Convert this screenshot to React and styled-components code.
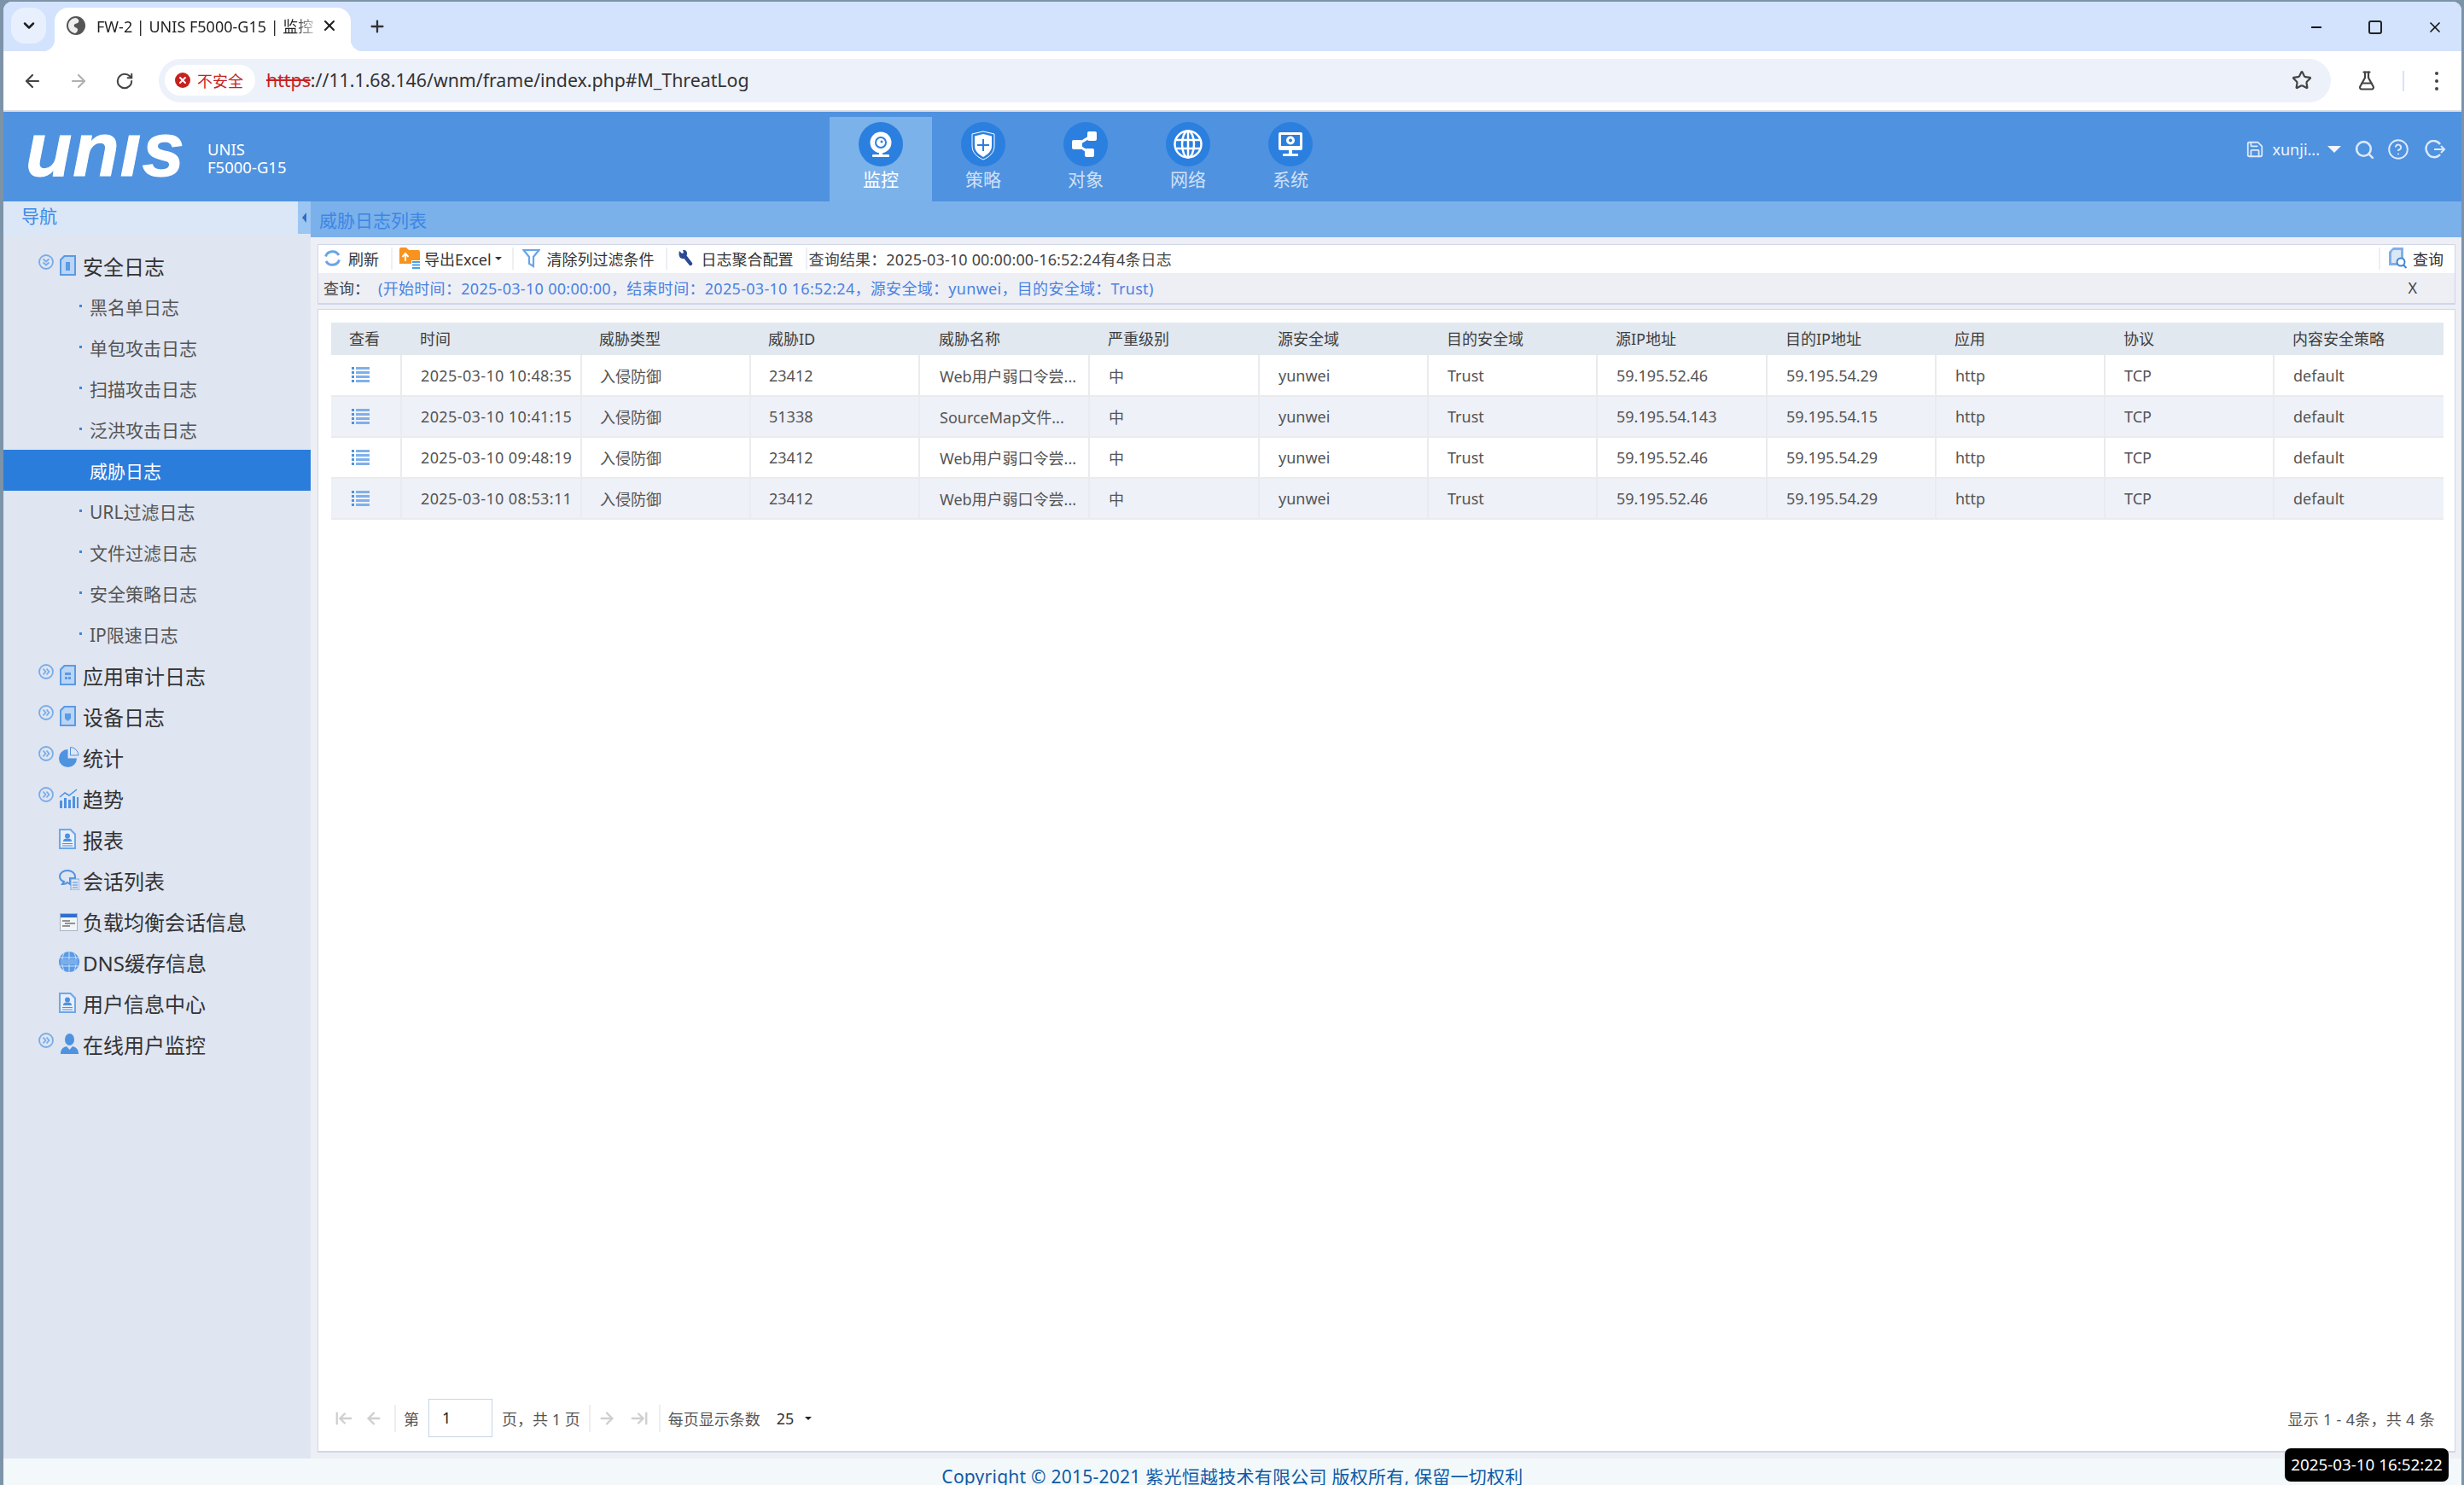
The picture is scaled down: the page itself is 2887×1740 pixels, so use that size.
import React from 'react';
import styled, { createGlobalStyle } from 'styled-components';
import {
  ArrowLeft,
  ArrowRight,
  ArrowLeftToLine,
  ArrowRightToLine,
  RotateCw,
  Star,
  FlaskConical,
  Plus,
  X,
  Minus,
  ChevronDown,
  Search,
  Save,
  CircleHelp,
} from 'lucide-react';

const FONT = `"Noto Sans", "Noto Sans CJK SC", sans-serif`;

const GlobalStyle = createGlobalStyle`
  html, body {
    margin: 0;
    padding: 0;
    height: 1740px;
    overflow: hidden;
    background: #7d93a8;
    font-family: ${FONT};
  }
  * { box-sizing: border-box; }
`;

const Window = styled.div`
  position: relative;
  margin: 2px 3px 0 4px;
  height: 1738px;
  display: flex;
  flex-direction: column;
  overflow: hidden;
  border-radius: 10px 10px 0 0;
  background: #fff;
`;

/* browser chrome */
const TabStrip = styled.div`
  height: 58px;
  flex: none;
  display: flex;
  align-items: flex-end;
  background: #d3e3fd;
  padding-left: 9px;
`;

const TabSearch = styled.div`
  width: 41px;
  height: 42px;
  margin-bottom: 9px;
  border-radius: 16px;
  background: #e8f0fe;
  color: #1f1f1f;
  display: flex;
  align-items: center;
  justify-content: center;
`;

const Tab = styled.div`
  position: relative;
  width: 347px;
  height: 51px;
  margin-left: 10px;
  padding: 0 15px 10px 13px;
  border-radius: 16px 16px 0 0;
  background: #fff;
  display: flex;
  align-items: center;
  color: #1f1f1f;
  &::before,
  &::after {
    content: '';
    position: absolute;
    bottom: 0;
    width: 14px;
    height: 14px;
  }
  &::before {
    left: -14px;
    background: radial-gradient(circle at 0 0, transparent 14px, #fff 14.5px);
  }
  &::after {
    right: -14px;
    background: radial-gradient(circle at 100% 0, transparent 14px, #fff 14.5px);
  }
`;

const TabTitle = styled.span`
  flex: 1;
  margin-left: 12px;
  font-size: 18px;
  white-space: nowrap;
  overflow: hidden;
  -webkit-mask-image: linear-gradient(to right, #000 88%, transparent);
  mask-image: linear-gradient(to right, #000 88%, transparent);
`;

const NewTab = styled.div`
  margin: 0 0 18px 20px;
  color: #333;
  display: flex;
`;

const WindowControls = styled.div`
  margin-left: auto;
  margin-bottom: 18px;
  padding-right: 21px;
  display: flex;
  align-items: center;
  gap: 52px;
  color: #111;
`;

const MaxBox = styled.div`
  width: 16px;
  height: 16px;
  border: 2px solid #222;
  border-radius: 3px;
`;

const BrowserBar = styled.div`
  height: 71px;
  flex: none;
  padding: 9px 0 0 22px;
  display: flex;
  align-items: flex-start;
  background: #fff;
  border-bottom: 2px solid #dcdfe3;
`;

const BarButton = styled.div`
  width: 24px;
  height: 51px;
  flex: none;
  margin-left: ${(p) => p.$left ?? 0}px;
  margin-right: ${(p) => p.$gap ?? 30}px;
  color: ${(p) => p.$color || '#444'};
  display: flex;
  align-items: center;
  justify-content: center;
`;

const Omnibox = styled.div`
  width: 2545px;
  flex: none;
  height: 51px;
  margin-left: -2px;
  padding: 7px 22px 0 7px;
  border-radius: 26px;
  background: #edf1fa;
  display: flex;
  align-items: flex-start;
  & > ${BarButton} {
    height: 36px;
  }
`;

const SecurityChip = styled.div`
  width: 106px;
  height: 36px;
  border-radius: 18px;
  background: #fff;
  color: #c5221f;
  font-size: 18px;
  padding-left: 12px;
  display: flex;
  align-items: center;
  gap: 8px;
`;

const ErrorDot = styled.span`
  width: 18px;
  height: 18px;
  border-radius: 50%;
  background: #c5221f;
  color: #fff;
  display: flex;
  align-items: center;
  justify-content: center;
`;

const UrlText = styled.div`
  margin-left: 13px;
  height: 36px;
  line-height: 36px;
  font-size: 21.3px;
  color: #333;
  white-space: nowrap;
  flex: 1;
`;

const UrlScheme = styled.span`
  color: #c5221f;
  text-decoration: line-through;
`;

const BarDivider = styled.div`
  width: 2px;
  height: 24px;
  margin: 14px 35px 0 0;
  background: #d3e3fd;
`;

const MenuDots = styled.div`
  width: 6px;
  height: 51px;
  display: flex;
  flex-direction: column;
  align-items: center;
  justify-content: center;
  gap: 5px;
  & > i {
    width: 4px;
    height: 4px;
    border-radius: 50%;
    background: #444;
  }
`;

/* app header */
const AppHeader = styled.header`
  height: 105px;
  flex: none;
  display: flex;
  align-items: flex-end;
  background: #4f92e0;
`;

const Brand = styled.div`
  width: 968px;
  height: 105px;
  padding: 0 0 0 26px;
  display: flex;
  align-items: center;
  color: #fff;
`;

const LogoText = styled.span`
  width: 213px;
  font-family: "Liberation Sans", sans-serif;
  font-size: 89px;
  font-weight: 700;
  font-style: italic;
  line-height: 1;
  letter-spacing: 1px;
  margin-top: -17px;
  -webkit-text-stroke: 1px #fff;
`;

const ProductName = styled.div`
  font-size: 18.5px;
  line-height: 21px;
  margin-top: 2px;
`;

const MainNav = styled.nav`
  display: flex;
`;

const NavItem = styled.div`
  width: 120px;
  height: 99px;
  padding-top: 6px;
  display: flex;
  flex-direction: column;
  align-items: center;
  background: ${(p) => (p.$active ? '#7bb2ea' : 'transparent')};
  color: ${(p) => (p.$active ? '#fff' : '#cfe0f6')};
  font-size: 21px;
  line-height: 30px;
`;

const NavCircle = styled.div`
  width: 52px;
  height: 52px;
  border-radius: 50%;
  background: #2b7fdf;
`;

const UserTools = styled.div`
  margin: 0 0 48px auto;
  padding-right: 18px;
  display: flex;
  align-items: center;
  color: #dbe9fb;
`;

const UserName = styled.span`
  margin: 0 9px 0 9px;
  font-size: 18px;
  color: #eef5fe;
`;

const Caret = styled.span`
  width: 0;
  height: 0;
  border-left: ${(p) => p.$size}px solid transparent;
  border-right: ${(p) => p.$size}px solid transparent;
  border-top: ${(p) => p.$size}px solid ${(p) => p.$color};
`;

const UserIcon = styled.span`
  display: flex;
  margin-left: ${(p) => p.$gap}px;
`;

/* page body */
const PageBody = styled.div`
  flex: 1;
  min-height: 0;
  display: flex;
  background: #edeff5;
`;

const Sidebar = styled.aside`
  width: 360px;
  flex: none;
  position: relative;
  background: #dfe5f1;
`;

const SideHead = styled.div`
  height: 39px;
  padding-left: 21px;
  line-height: 34px;
  font-size: 21px;
  color: #3e8ae6;
  background: #dbe7f7;
`;

const SideToggle = styled.div`
  position: absolute;
  top: 0;
  right: 0;
  width: 15px;
  height: 38px;
  background: #9cc6f2;
  display: flex;
  align-items: center;
  justify-content: center;
  &::before {
    content: '';
    border-top: 6px solid transparent;
    border-bottom: 6px solid transparent;
    border-right: 5px solid #2a6fc4;
  }
`;

const TreeList = styled.div`
  padding-top: 12px;
`;

const TreeRow = styled.div`
  height: 48px;
  padding-left: 41px;
  display: flex;
  align-items: center;
  font-size: 24px;
  color: #333;
`;

const TreeToggle = styled.span`
  width: 18px;
  height: 18px;
  margin: -9px 6px 0 0;
  flex: none;
  display: flex;
`;

const TreeIcon = styled.span`
  width: 24px;
  height: 25px;
  margin-right: 4px;
  flex: none;
  display: flex;
`;

const TreeLeaf = styled.div`
  height: 48px;
  padding-left: 101px;
  position: relative;
  display: flex;
  align-items: center;
  font-size: 21px;
  color: ${(p) => (p.$active ? '#fff' : '#555')};
  background: ${(p) => (p.$active ? '#2b7ddc' : 'transparent')};
  &::before {
    content: '';
    display: ${(p) => (p.$active ? 'none' : 'block')};
    position: absolute;
    left: 89px;
    top: 22px;
    width: 3px;
    height: 3px;
    background: #3d85d8;
  }
`;

const Main = styled.main`
  flex: 1;
  min-width: 0;
  display: flex;
  flex-direction: column;
`;

const TitleBar = styled.div`
  height: 42px;
  flex: none;
  padding-left: 10px;
  line-height: 44px;
  font-size: 21px;
  color: #3d86e6;
  background: #7ab1ea;
`;

const Content = styled.div`
  flex: 1;
  min-height: 0;
  padding: 8px 7px 7px 8px;
  display: flex;
  flex-direction: column;
  gap: 5px;
`;

const FilterPanel = styled.section`
  height: 71px;
  flex: none;
  border: 1px solid #cfd6ea;
  border-width: 1px 1px 2px 1px;
`;

const ToolRow = styled.div`
  height: 33px;
  padding-bottom: 2px;
  display: flex;
  align-items: center;
  background: #fff;
  font-size: 18px;
  color: #333;
`;

const ToolButton = styled.div`
  height: 26px;
  padding: 0 ${(p) => p.$right}px 0 ${(p) => p.$left}px;
  display: flex;
  align-items: center;
  gap: ${(p) => p.$gap}px;
  border-right: 2px solid #edeff3;
  white-space: nowrap;
`;

const ResultText = styled.span`
  margin-left: 2px;
  white-space: nowrap;
  color: #444;
  letter-spacing: 0.15px;
`;

const QueryButton = styled.div`
  margin-left: auto;
  padding: 0 13px 0 10px;
  height: 26px;
  display: flex;
  align-items: center;
  gap: 6px;
  border-left: 2px solid #edeff3;
`;

const QueryRow = styled.div`
  height: 35px;
  padding: 0 44px 2px 6px;
  display: flex;
  align-items: center;
  background: #eeeff5;
  font-size: 18px;
  color: #444;
`;

const QueryLabel = styled.span`
  width: 64px;
  flex: none;
`;

const QueryText = styled.span`
  color: #4a82e2;
  white-space: nowrap;
  letter-spacing: 0.3px;
`;

const QueryClose = styled.span`
  margin-left: auto;
`;

const TablePanel = styled.section`
  flex: 1;
  min-height: 0;
  border: 1px solid #cfd6ea;
  border-width: 1px 1px 2px 1px;
  background: #fff;
  padding: 15px 14px 0 15px;
  display: flex;
  flex-direction: column;
`;

const LogTable = styled.table`
  width: 2475px;
  flex: none;
  border-collapse: collapse;
  table-layout: fixed;
  font-size: 18px;
`;

const Col = styled.col`
  width: ${(p) => p.$width}px;
`;

const HeadCell = styled.th`
  height: 38px;
  padding: 0 0 2px ${(p) => p.$pad || 22}px;
  text-align: left;
  font-weight: 400;
  color: #3d3d3d;
  background: #e2e8ef;
`;

const Row = styled.tr`
  height: 48px;
  background: ${(p) => (p.$striped ? '#eef1f8' : '#fff')};
  border-bottom: 2px solid #e9ebef;
`;

const Cell = styled.td`
  padding: 0 0 0 ${(p) => p.$pad}px;
  color: #555;
  white-space: nowrap;
  overflow: hidden;
  letter-spacing: ${(p) => p.$spacing}px;
  border-right: 2px solid #e9ebef;
  &:last-child {
    border-right: 0;
  }
`;

const ViewCell = styled.td`
  padding: 0 0 0 24px;
  border-right: 2px solid #e9ebef;
  line-height: 0;
`;

const Pager = styled.div`
  margin-top: auto;
  height: 63px;
  margin-bottom: 7px;
  display: flex;
  align-items: center;
  font-size: 18px;
  color: #555;
`;

const PageIcon = styled.span`
  display: flex;
  margin: ${(p) => p.$margin};
  color: #cfcfcf;
`;

const PagerSep = styled.span`
  width: 2px;
  height: 32px;
  margin: ${(p) => p.$margin};
  background: #eeeeee;
`;

const PageInput = styled.div`
  width: 75px;
  height: 45px;
  margin: 0 11px;
  padding-left: 15px;
  border: 1px solid #c5d5e8;
  line-height: 43px;
  font-size: 18px;
  color: #222;
`;

const PageSize = styled.span`
  margin: 0 13px 0 19px;
  color: #333;
`;

const PagerInfo = styled.span`
  margin-left: auto;
  padding-right: 9px;
  white-space: nowrap;
  letter-spacing: 0.3px;
`;

const Footer = styled.footer`
  height: 31px;
  flex: none;
  padding-top: 9px;
  text-align: center;
  font-size: 21px;
  letter-spacing: 0.25px;
  line-height: 24px;
  color: #0f5aa6;
  background: #f3f9fa;
  white-space: nowrap;
  overflow: hidden;
`;

const ClockBadge = styled.div`
  position: absolute;
  right: 15px;
  bottom: 4px;
  width: 192px;
  height: 39px;
  border-radius: 7px;
  background: #000;
  color: #fff;
  font-size: 18.8px;
  line-height: 39px;
  text-align: center;
  white-space: nowrap;
`;

/* drawn icons */
const Webcam = () => (
  <svg width="52" height="52" viewBox="0 0 52 52">
    <circle cx="26" cy="24" r="12.5" fill="#fff" />
    <circle cx="26" cy="24" r="6" fill="none" stroke="#2b7fdf" strokeWidth="2" />
    <circle cx="27" cy="23" r="1.5" fill="#2b7fdf" />
    <path d="M24 35h4v3h-4z" fill="#fff" />
    <rect x="16" y="38" width="20" height="3" rx="1" fill="#fff" />
  </svg>
);

const ShieldPlus = () => (
  <svg width="52" height="52" viewBox="0 0 52 52" fill="none" stroke="#fff">
    <path d="M26 11l13 3v14c0 8-6 13-13 16-7-3-13-8-13-16V14z" strokeWidth="1" />
    <path d="M26 14l10 2.5V28c0 6-5 10-10 13-5-3-10-7-10-13V16.500z" fill="#fff" stroke="none" />
    <path d="M26 20v14M19 27h14" stroke="#2b7fdf" strokeWidth="2" />
  </svg>
);

const ShareNodes = () => (
  <svg width="52" height="52" viewBox="0 0 52 52" fill="#fff">
    <path d="M17 26l16-10M17 27l13 9" stroke="#fff" strokeWidth="3" />
    <rect x="28" y="11" width="11" height="11" rx="2" />
    <rect x="10" y="21" width="12" height="11" rx="2" />
    <rect x="25" y="31" width="11" height="10" rx="2" />
  </svg>
);

const MonitorGear = () => (
  <svg width="52" height="52" viewBox="0 0 52 52">
    <path d="M12 14a2 2 0 012-2h24a2 2 0 012 2v17a2 2 0 01-2 2H14a2 2 0 01-2-2z" fill="#fff" />
    <path d="M15 15h22v13H15z" fill="#2b7fdf" />
    <circle cx="26" cy="21.500" r="5" fill="#fff" />
    <circle cx="26" cy="21.500" r="2" fill="#2b7fdf" />
    <path d="M24 33h4v4h-4z" fill="#fff" />
    <rect x="17" y="37" width="18" height="3" rx="1" fill="#fff" />
  </svg>
);

const DocIcon = ({ children }) => (
  <svg width="20" height="24" viewBox="-1 0 20 24">
    <path d="M5 0h14v24H0V5z" fill="#5a9ae6" />
    <path d="M2 6l4-4h11v20H2z" fill="#bcd5f5" />
    {children}
  </svg>
);

const PieIcon = () => (
  <svg width="24" height="24" viewBox="0 0 24 24">
    <path d="M10.500 3a10.500 10.500 0 1010.500 10.500H10.500z" fill="#4f92e0" />
    <path d="M13.500 0.500A10 10 0 0123 10h-9.500z" fill="#dfe5f1" stroke="#4f92e0" />
  </svg>
);

const TrendIcon = () => (
  <svg width="24" height="24" viewBox="0 0 24 24" fill="#4f92e0">
    <path d="M1 15h3v9H1zM6 12h3v12H6zM11 14h3v10h-3zM16 10h3v14h-3zM21 11h2v13h-2z" />
    <path d="M1 11l6-5 5 3 9-7" fill="none" stroke="#4f92e0" strokeWidth="1.500" />
  </svg>
);

const CardIcon = () => (
  <svg width="21" height="24" viewBox="0 0 21 24">
    <path d="M0 0h14l6 6v18H0z" fill="#6ea7ea" />
    <path d="M2 2h11l5 5v15H2z" fill="#e6eefa" />
    <circle cx="10" cy="8.500" r="3" fill="#4f92e0" />
    <path d="M5 15c0-3 2-3.500 5-3.500s5 .5 5 3.500z" fill="#4f92e0" />
    <path d="M4 17.500h12M4 20h12" stroke="#4f92e0" strokeWidth="1" />
  </svg>
);

const ChatIcon = () => (
  <svg width="24" height="24" viewBox="0 0 24 24">
    <path d="M10 1c5 0 9 3 9 7v2h-6v7l-3-2c-1 1-4 2-6 2l2-3C3 13 1 11 1 8c0-4 4-7 9-7z" fill="none" stroke="#4f92e0" strokeWidth="2" />
    <path d="M14 11h10v13H14z" fill="#dfe5f1" stroke="#6ea7ea" />
    <path d="M16 15h6M16 18h6M16 21h6" stroke="#4f92e0" />
  </svg>
);

const WindowIcon = () => (
  <svg width="22" height="21" viewBox="-1 0 22 21" style={{ marginTop: 3 }}>
    <rect x="0.500" y="0.500" width="20" height="20" fill="#f2f4f7" stroke="#a9b3c2" />
    <path d="M1 1h19v4H1z" fill="#2f6fd0" />
    <path d="M3 9h9M6 12h12M3 15h9" stroke="#333" strokeWidth="1.200" />
  </svg>
);

const DnsGlobe = () => (
  <svg width="24" height="24" viewBox="0 0 24 24" fill="none">
    <circle cx="12" cy="12" r="12" fill="#5a9ae6" />
    <path d="M0 7h24M0 17h24M12 0v24M6 2c-3 6-3 14 0 20M18 2c3 6 3 14 0 20" stroke="#cfe0f6" strokeWidth="1" />
    <path d="M2 9h20v6H2z" fill="#7aaeea" />
  </svg>
);

const PersonIcon = () => (
  <svg width="23" height="24" viewBox="-2 0 23 24" fill="#4f92e0">
    <ellipse cx="10.500" cy="7" rx="5.500" ry="7" />
    <path d="M0 24c0-6 3-8 7-9l3.500 4 3.500-4c4 1 7 3 7 9z" />
  </svg>
);

const CircleChevrons = ({ open }) => (
  <svg width="18" height="18" viewBox="0 0 18 18" fill="none" stroke="#78ace8">
    <circle cx="9" cy="9" r="8" strokeWidth="1.800" />
    <path
      d={open ? 'M5.500 5.500L9 8.500l3.500-3M5.500 9.500L9 12.500l3.500-3' : 'M5.500 5.500L8.500 9l-3 3.500M9.500 5.500L12.500 9l-3 3.500'}
      strokeWidth="1.800"
    />
  </svg>
);

const RefreshIcon = () => (
  <svg width="21" height="21" viewBox="0 0 21 21" fill="none" stroke="#6aa5e8" strokeWidth="3">
    <path d="M2.500 8.500A8.500 8.500 0 0118 7" />
    <path d="M18.500 12.500A8.500 8.500 0 013 14" />
  </svg>
);

const ExportIcon = () => (
  <svg width="25" height="26" viewBox="0 0 25 26">
    <path d="M0 2a2 2 0 012-2h6l3 3h11a2 2 0 012 2v14H0z" fill="#f7931e" />
    <path d="M7 16V8M3.500 11L7 7l3.500 4" fill="none" stroke="#fff" strokeWidth="2" />
    <path d="M14 15h11v11H14z" fill="#fff" />
    <path d="M15 16h9v2h-9zM15 19.500h9v2h-9zM15 23h9v2h-9z" fill="#4aa0e8" />
  </svg>
);

const FunnelIcon = () => (
  <svg width="21" height="24" viewBox="0 0 21 24" fill="none" stroke="#6aa5e8" strokeWidth="2.200">
    <path d="M1.500 2h18l-6.500 8v11l-5-3v-8z" />
  </svg>
);

const WrenchIcon = () => (
  <svg width="18" height="20" viewBox="0 0 18 20" fill="#2c4a94">
    <path d="M2 1l3 3 2-1-1-3c3-.5 5 1 5 4 0 1 0 1.500-.5 2.500L17 15c1 1.500-1 4-3 3L7.500 10C4 11 0 8 2 1z" />
  </svg>
);

const QueryIcon = () => (
  <svg width="22" height="25" viewBox="0 0 22 25">
    <path d="M5 0h12v21H0V5z" fill="#7fb0e8" />
    <path d="M5 3h9v15H3V6z" fill="#dbe7f7" />
    <circle cx="14" cy="17" r="4.500" fill="#fff" stroke="#3d85d8" strokeWidth="2" />
    <path d="M17 20.500l3.500 3.500" stroke="#3d85d8" strokeWidth="2" />
  </svg>
);

const RowListIcon = () => (
  <svg width="21" height="19" viewBox="0 0 21 19" fill="#7fb0ea">
    <path d="M0 0h3v3H0zM0 5h3v3H0zM0 10h3v3H0zM0 15h3v3H0z" fill="#4f92e0" />
    <path d="M5 0h16v3H5zM5 5h16v3H5zM5 10h16v3H5zM5 15h16v3H5z" />
  </svg>
);

const LogoutIcon = () => (
  <svg width="25" height="22" viewBox="0 0 25 22" fill="none" stroke="#dbe9fb" strokeWidth="2.500">
    <path d="M18 5A9 9 0 103 15a9 9 0 0015 2" />
    <path d="M11 11h12M19 7l4 4-4 4" strokeWidth="2" />
  </svg>
);

const GlobeIcon = () => (
  <svg width="24" height="24" viewBox="0 0 24 24" fill="#555">
    <circle cx="12" cy="12" r="11" />
    <path d="M12 3c3 1 4 3 3 5s-4 1-5 3 1 3 3 4 1 5-2 6C6 20 3 16 3 12c0-5 4-9 9-9z" fill="#fff" opacity="0.9" />
  </svg>
);

const NAV_ITEMS = [
  { label: '监控', icon: <Webcam />, active: true },
  { label: '策略', icon: <ShieldPlus /> },
  { label: '对象', icon: <ShareNodes /> },
  {
    label: '网络',
    icon: (
      <svg width="52" height="52" viewBox="0 0 52 52" fill="none" stroke="#fff" strokeWidth="2.500">
        <circle cx="26" cy="26" r="15.500" />
        <ellipse cx="26" cy="26" rx="7" ry="15.500" />
        <path d="M26 10v32M11 21h30M11 31h30" />
      </svg>
    ),
  },
  { label: '系统', icon: <MonitorGear /> },
];

const SECURITY_LOGS = [
  '黑名单日志',
  '单包攻击日志',
  '扫描攻击日志',
  '泛洪攻击日志',
  '威胁日志',
  'URL过滤日志',
  '文件过滤日志',
  '安全策略日志',
  'IP限速日志',
];

const docMark = <path d="M6 9h7v3H6zM6 14h3v3H6zM10 14h3v3h-3z" fill="#5a9ae6" />;

const TREE_ITEMS = [
  { label: '应用审计日志', toggle: true, icon: <DocIcon>{docMark}</DocIcon> },
  { label: '设备日志', toggle: true, icon: <DocIcon><path d="M6 9h7v6l-3.500 3L6 15z" fill="#5a9ae6" /></DocIcon> },
  { label: '统计', toggle: true, icon: <PieIcon /> },
  { label: '趋势', toggle: true, icon: <TrendIcon /> },
  { label: '报表', icon: <CardIcon /> },
  { label: '会话列表', icon: <ChatIcon /> },
  { label: '负载均衡会话信息', icon: <WindowIcon /> },
  { label: 'DNS缓存信息', icon: <DnsGlobe /> },
  { label: '用户信息中心', icon: <CardIcon /> },
  { label: '在线用户监控', toggle: true, icon: <PersonIcon /> },
];

const COLUMNS = [
  { title: '时间', key: 'time', width: 211, spacing: 0.38 },
  { title: '威胁类型', key: 'type', width: 198, pad: 21 },
  { title: '威胁ID', key: 'id', width: 198, pad: 21 },
  { title: '威胁名称', key: 'name', width: 199, pad: 23 },
  { title: '严重级别', key: 'level', width: 199 },
  { title: '源安全域', key: 'srcZone', width: 198 },
  { title: '目的安全域', key: 'dstZone', width: 198 },
  { title: '源IP地址', key: 'srcIp', width: 199 },
  { title: '目的IP地址', key: 'dstIp', width: 198 },
  { title: '应用', key: 'app', width: 198 },
  { title: '协议', key: 'proto', width: 198 },
  { title: '内容安全策略', key: 'policy', width: 199 },
];

const base = {
  type: '入侵防御',
  level: '中',
  srcZone: 'yunwei',
  dstZone: 'Trust',
  app: 'http',
  proto: 'TCP',
  policy: 'default',
};

const ROWS = [
  { ...base, time: '2025-03-10 10:48:35', id: '23412', name: 'Web用户弱口令尝...', srcIp: '59.195.52.46', dstIp: '59.195.54.29' },
  { ...base, time: '2025-03-10 10:41:15', id: '51338', name: 'SourceMap文件...', srcIp: '59.195.54.143', dstIp: '59.195.54.15' },
  { ...base, time: '2025-03-10 09:48:19', id: '23412', name: 'Web用户弱口令尝...', srcIp: '59.195.52.46', dstIp: '59.195.54.29' },
  { ...base, time: '2025-03-10 08:53:11', id: '23412', name: 'Web用户弱口令尝...', srcIp: '59.195.52.46', dstIp: '59.195.54.29' },
];

export default function App() {
  return (
    <>
      <GlobalStyle />
      <Window>
        <TabStrip>
          <TabSearch>
            <ChevronDown size={20} strokeWidth={3} />
          </TabSearch>
          <Tab>
            <GlobeIcon />
            <TabTitle>FW-2 | UNIS F5000-G15 | 监控</TabTitle>
            <X size={20} strokeWidth={2.5} />
          </Tab>
          <NewTab>
            <Plus size={22} strokeWidth={2.5} />
          </NewTab>
          <WindowControls>
            <Minus size={18} strokeWidth={2.5} />
            <MaxBox />
            <X size={20} strokeWidth={2} />
          </WindowControls>
        </TabStrip>

        <BrowserBar>
          <BarButton><ArrowLeft size={24} strokeWidth={2.2} /></BarButton>
          <BarButton $color="#b0b0b0"><ArrowRight size={24} strokeWidth={2.2} /></BarButton>
          <BarButton><RotateCw size={22} strokeWidth={2.2} /></BarButton>
          <Omnibox>
            <SecurityChip>
              <ErrorDot><X size={12} strokeWidth={4} /></ErrorDot>
              不安全
            </SecurityChip>
            <UrlText>
              <UrlScheme>https</UrlScheme>://11.1.68.146/wnm/frame/index.php#M_ThreatLog
            </UrlText>
            <BarButton $gap={0}><Star size={24} strokeWidth={2.2} /></BarButton>
          </Omnibox>
          <BarButton $left={30} $gap={30}><FlaskConical size={25} strokeWidth={2.2} /></BarButton>
          <BarDivider />
          <MenuDots><i /><i /><i /></MenuDots>
        </BrowserBar>

        <AppHeader>
          <Brand>
            <LogoText>unıs</LogoText>
            <ProductName>UNIS<br />F5000-G15</ProductName>
          </Brand>
          <MainNav>
            {NAV_ITEMS.map((item) => (
              <NavItem key={item.label} $active={item.active}>
                <NavCircle>{item.icon}</NavCircle>
                {item.label}
              </NavItem>
            ))}
          </MainNav>
          <UserTools>
            <Save size={22} strokeWidth={2} />
            <UserName>xunji...</UserName>
            <Caret $size={8} $color="#eef5fe" />
            <UserIcon $gap={15}><Search size={25} strokeWidth={2.5} /></UserIcon>
            <UserIcon $gap={14}><CircleHelp size={26} strokeWidth={1.8} /></UserIcon>
            <UserIcon $gap={18}><LogoutIcon /></UserIcon>
          </UserTools>
        </AppHeader>

        <PageBody>
          <Sidebar>
            <SideHead>导航</SideHead>
            <SideToggle />
            <TreeList>
              <TreeRow>
                <TreeToggle><CircleChevrons open /></TreeToggle>
                <TreeIcon><DocIcon><path d="M7 8h5v10H7z" fill="#5a9ae6" /></DocIcon></TreeIcon>
                安全日志
              </TreeRow>
              {SECURITY_LOGS.map((name) => (
                <TreeLeaf key={name} $active={name === '威胁日志'}>{name}</TreeLeaf>
              ))}
              {TREE_ITEMS.map((item) => (
                <TreeRow key={item.label}>
                  <TreeToggle>{item.toggle && <CircleChevrons />}</TreeToggle>
                  <TreeIcon>{item.icon}</TreeIcon>
                  {item.label}
                </TreeRow>
              ))}
            </TreeList>
          </Sidebar>

          <Main>
            <TitleBar>威胁日志列表</TitleBar>
            <Content>
              <FilterPanel>
                <ToolRow>
                  <ToolButton $left={6} $right={14} $gap={8}><RefreshIcon />刷新</ToolButton>
                  <ToolButton $left={8} $right={12} $gap={4}>
                    <ExportIcon />导出Excel<Caret $size={4} $color="#333" />
                  </ToolButton>
                  <ToolButton $left={10} $right={13} $gap={8}><FunnelIcon />清除列过滤条件</ToolButton>
                  <ToolButton $left={12} $right={14} $gap={10}><WrenchIcon />日志聚合配置</ToolButton>
                  <ResultText>查询结果：2025-03-10 00:00:00-16:52:24有4条日志</ResultText>
                  <QueryButton><QueryIcon />查询</QueryButton>
                </ToolRow>
                <QueryRow>
                  <QueryLabel>查询：</QueryLabel>
                  <QueryText>(开始时间：2025-03-10 00:00:00，结束时间：2025-03-10 16:52:24，源安全域：yunwei，目的安全域：Trust)</QueryText>
                  <QueryClose>X</QueryClose>
                </QueryRow>
              </FilterPanel>

              <TablePanel>
                <LogTable>
                  <colgroup>
                    <Col $width={82} />
                    {COLUMNS.map((col) => <Col key={col.key} $width={col.width} />)}
                  </colgroup>
                  <thead>
                    <tr>
                      <HeadCell $pad={21}>查看</HeadCell>
                      {COLUMNS.map((col) => <HeadCell key={col.key} $pad={col.pad}>{col.title}</HeadCell>)}
                    </tr>
                  </thead>
                  <tbody>
                    {ROWS.map((row, i) => (
                      <Row key={row.time} $striped={i % 2 === 1}>
                        <ViewCell><RowListIcon /></ViewCell>
                        {COLUMNS.map((col) => (
                          <Cell key={col.key} $pad={col.pad || 22} $spacing={col.spacing || 0}>{row[col.key]}</Cell>
                        ))}
                      </Row>
                    ))}
                  </tbody>
                </LogTable>

                <Pager>
                  <PageIcon $margin="0 13px 0 4px"><ArrowLeftToLine size={22} strokeWidth={2.5} /></PageIcon>
                  <PageIcon $margin="0 13px 0 0"><ArrowLeft size={22} strokeWidth={2.5} /></PageIcon>
                  <PagerSep $margin="0 9px 0 0" />
                  第
                  <PageInput>1</PageInput>
                  页，共 1 页
                  <PagerSep $margin="0 8px 0 10px" />
                  <PageIcon $margin="0 16px 0 0"><ArrowRight size={22} strokeWidth={2.5} /></PageIcon>
                  <PageIcon $margin="0 12px 0 0"><ArrowRightToLine size={22} strokeWidth={2.5} /></PageIcon>
                  <PagerSep $margin="0 9px 0 0" />
                  每页显示条数
                  <PageSize>25</PageSize>
                  <Caret $size={4} $color="#222" />
                  <PagerInfo>显示 1 - 4条，共 4 条</PagerInfo>
                </Pager>
              </TablePanel>
            </Content>
          </Main>
        </PageBody>

        <Footer>Copyright © 2015-2021 紫光恒越技术有限公司 版权所有, 保留一切权利</Footer>
        <ClockBadge>2025-03-10 16:52:22</ClockBadge>
      </Window>
    </>
  );
}
